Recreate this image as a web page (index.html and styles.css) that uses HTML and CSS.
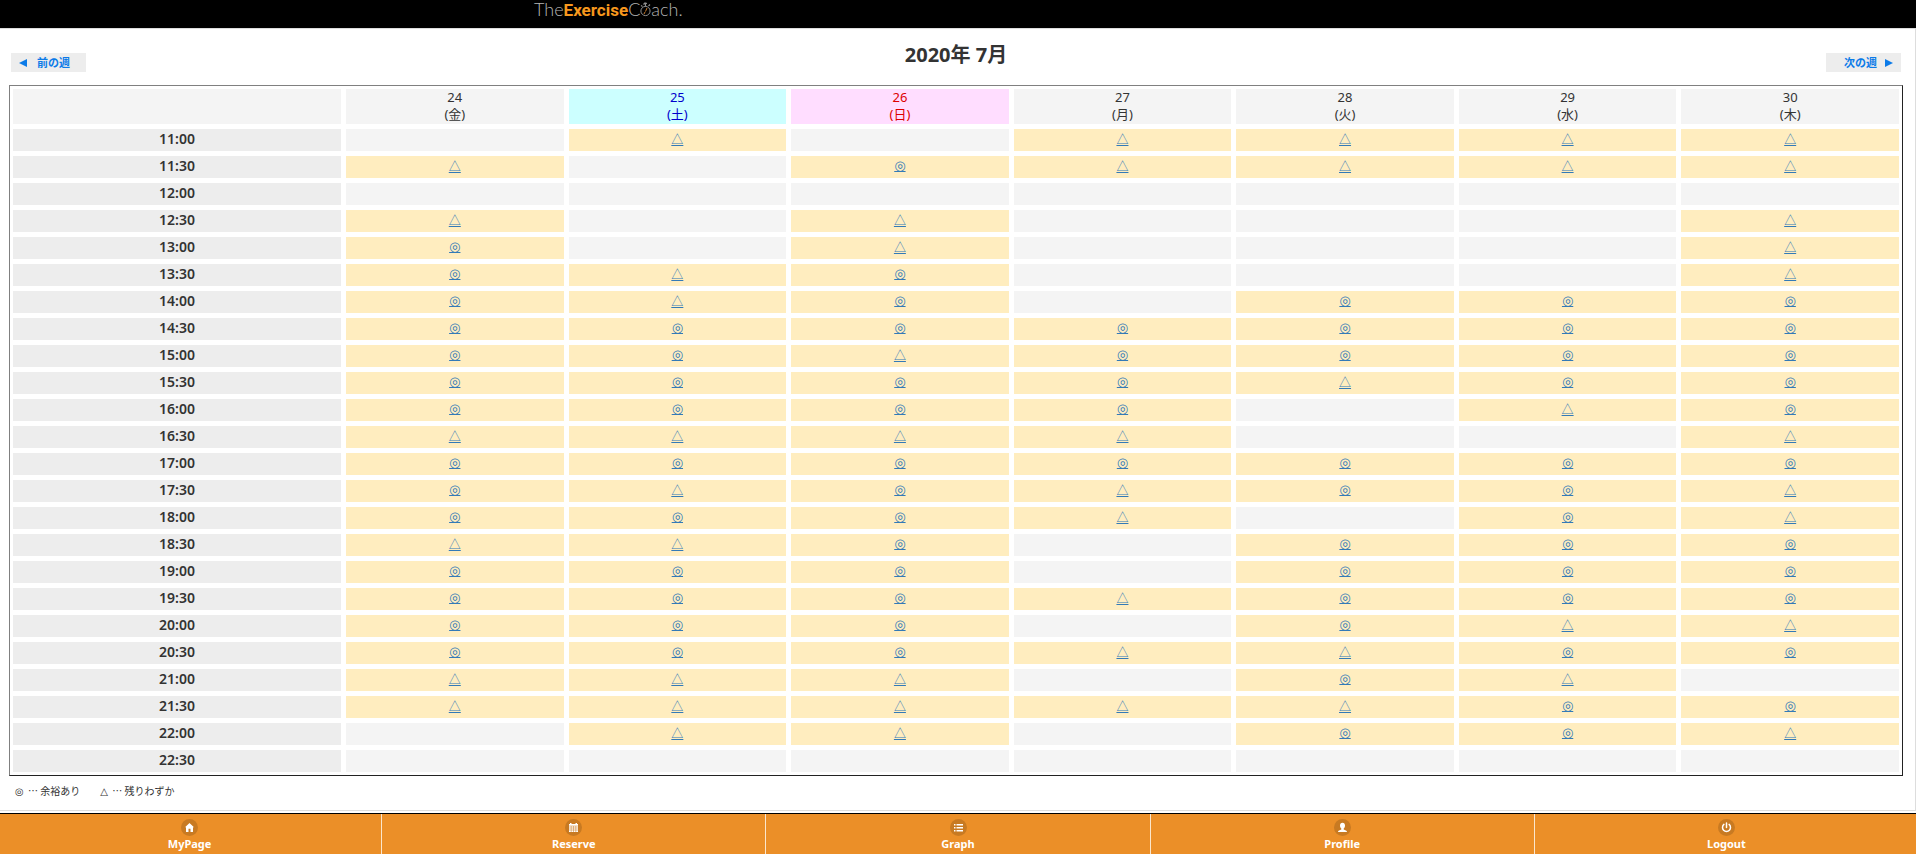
FILE: index.html
```html
<!DOCTYPE html>
<html lang="ja">
<head>
<meta charset="utf-8">
<title>The Exercise Coach</title>
<link rel="stylesheet" href="styles.css">
</head>
<body>
<header class="site-header">
  <div class="logo"><span class="logo-thin">The</span><span class="logo-bold">Exercise</span><span class="logo-thin">C</span><svg class="logo-watch" viewBox="0 0 11 18" aria-hidden="true"><g fill="none" stroke="#8f8f8f"><circle cx="5.5" cy="11" r="4.6" stroke-width="1"/><path d="M3.5 4.5L5 3l2 .5M5.5 3v3.400M1 5.500l1.500 1M8.500 6l1.500-1.500" stroke-width="1.200"/></g><path d="M5.500 11.500L7 8M5 12l-1 2" stroke="#c87a2a" stroke-width="1" fill="none"/></svg><span class="logo-thin">ach.</span></div>
</header>
<main class="page">
  <div class="week-bar">
    <a class="week-link" href="#"><svg viewBox="0 0 8 8" aria-hidden="true"><path d="M8 0v8L0 4z"/></svg><span>前の週</span></a>
    <h1 class="month">2020年 7月</h1>
    <a class="week-link week-next" href="#"><span>次の週</span><svg viewBox="0 0 8 8" aria-hidden="true"><path d="M0 0v8l8-4z"/></svg></a>
  </div>
  <table class="schedule">
    <colgroup><col class="col-time"><col span="7"></colgroup>
    <thead>
      <tr>
        <td></td>
        <th scope="col">24<br>(金)</th>
        <th scope="col" class="sat">25<br>(土)</th>
        <th scope="col" class="sun">26<br>(日)</th>
        <th scope="col">27<br>(月)</th>
        <th scope="col">28<br>(火)</th>
        <th scope="col">29<br>(水)</th>
        <th scope="col">30<br>(木)</th>
      </tr>
    </thead>
    <tbody id="slots"></tbody>
  </table>
  <p class="legend"><span><span class="mark">◎</span> … 余裕あり</span><span><span class="mark">△</span> … 残りわずか</span></p>
</main>
<nav class="tabs">
  <a href="#"><svg viewBox="0 0 17 17" aria-hidden="true"><circle cx="8.500" cy="8.500" r="8.500"/><path d="M8.500 4L4 8.300h1V13h2.500V9.800h2V13H12V8.300h1z"/></svg><span>MyPage</span></a>
  <a href="#"><svg viewBox="0 0 17 17" aria-hidden="true"><circle cx="8.500" cy="8.500" r="8.500"/><path d="M4 5h1V4h1.500v1h4V4H12v1h1v8H4z"/><path class="cut" d="M4 7h9M4 9h9M4 11h9M6.200 7v6M8.500 7v6M10.800 7v6"/></svg><span>Reserve</span></a>
  <a href="#"><svg viewBox="0 0 17 17" aria-hidden="true"><circle cx="8.500" cy="8.500" r="8.500"/><path d="M4 5h1.500v1.500H4zM6.500 5H13v1.500H6.500zM4 8h1.500v1.500H4zM6.500 8H13v1.500H6.500zM4 11h1.500v1.500H4zM6.500 11H13v1.500H6.500z"/></svg><span>Graph</span></a>
  <a href="#"><svg viewBox="0 0 17 17" aria-hidden="true"><circle cx="8.500" cy="8.500" r="8.500"/><path d="M8.500 3.800c1.700 0 2.500 1.200 2.500 2.800 0 1.300-.5 2.300-1.300 3v.9c1.500.5 3.300 1 3.300 2.500H4c0-1.500 1.800-2 3.300-2.500v-.9C6.500 8.900 6 7.900 6 6.600c0-1.600.8-2.800 2.500-2.800z"/></svg><span>Profile</span></a>
  <a href="#"><svg viewBox="0 0 17 17" aria-hidden="true"><circle cx="8.500" cy="8.500" r="8.500"/><path class="line" d="M8.500 4v4.500M5.900 5.400a4 4 0 1 0 5.200 0"/></svg><span>Logout</span></a>
</nav>
<script src="schedule.js"></script>
</body>
</html>
```
FILE: styles.css
```css
* { box-sizing: border-box; }
body {
  margin: 0;
  min-height: 100vh;
  display: flex;
  flex-direction: column;
  overflow-x: hidden;
  background: #fff;
  color: #333;
  font: 13px/18px "Noto Sans", "Noto Sans CJK JP", sans-serif;
}
.site-header {
  height: 28px;
  background: #000;
  padding-left: 534px;
}
.logo {
  display: flex;
  align-items: baseline;
  height: 18px;
  line-height: 18px;
  white-space: nowrap;
}
.logo-thin { font-family: Lato, sans-serif; font-weight: 300; font-size: 18px; color: #b5b5b5; }
.logo-bold { font-family: Roboto, sans-serif; font-weight: 700; font-size: 17px; color: #f7981d; }
.logo-watch { width: 11px; height: 18px; align-self: flex-start; }
.page {
  flex: 1;
  border: solid #ddd;
  border-width: 1px 1px 1px 0;
  padding: 14px 12px 8px 9px;
  margin-bottom: 2px;
}
.week-bar {
  display: flex;
  justify-content: space-between;
  align-items: flex-end;
  height: 29px;
  margin: 0 2px 13px;
}
.month { margin: 0; font-size: 20px; line-height: 24px; align-self: flex-start; }
.week-link {
  display: flex;
  align-items: center;
  gap: 10px;
  width: 75px;
  height: 19px;
  padding: 0 8px;
  background: #ededed;
  color: #0c7be8;
  font-size: 11px;
  font-weight: 700;
  text-decoration: none;
}
.week-link svg { width: 8px; height: 8px; fill: currentColor; }
.week-next { justify-content: flex-end; gap: 8px; }
.schedule {
  width: 100%;
  table-layout: fixed;
  border: 1px solid;
  border-color: #808080 #222 #222 #808080;
  border-collapse: separate;
  border-spacing: 1px;
}
.col-time { width: 332px; }
.schedule th, .schedule td {
  height: 26px;
  padding: 0;
  border: 2px solid #fff;
  background: #f4f4f4;
  text-align: center;
  vertical-align: top;
}
.schedule thead th, .schedule thead td { height: 39px; line-height: 17px; font-weight: 400; }
.schedule thead .sat { background: #cff; color: #00c; }
.schedule thead .sun { background: #fdf; color: #d00; }
.schedule tbody th { background: #ededed; font-size: 14px; font-weight: 600; line-height: 20px; }
.schedule tbody .open { background: #ffedbf; }
.schedule tbody td { font-size: 12px; line-height: 20px; }
.schedule a { color: #337ab7; font-family: "Noto Sans CJK JP", sans-serif; }
.schedule .plenty { font-family: "DejaVu Sans", sans-serif; font-size: 13px; }
.legend {
  display: flex;
  gap: 20px;
  margin: 6px 0 0;
  padding-left: 6px;
  font-family: "Noto Sans CJK JP", sans-serif;
  font-size: 10px;
}
.legend .mark { margin-right: 2px; font-family: "DejaVu Sans", sans-serif; }
.tabs {
  display: flex;
  margin: 0 -2px;
  border-top: 1px solid #000;
  background: #eb8f28;
}
.tabs a {
  flex: 1;
  display: flex;
  flex-direction: column;
  align-items: center;
  height: 40px;
  padding-top: 5px;
  border-right: 1px solid #fbe6cc;
  color: #fff;
  font: 700 11px/15px "Noto Sans", sans-serif;
  text-decoration: none;
}
.tabs a:last-child { border-right: 0; }
.tabs svg { width: 17px; height: 17px; fill: #fff; }
.tabs circle { fill: #c87a22; }
.tabs .cut { fill: none; stroke: #c87a22; stroke-width: .5; }
.tabs .line { fill: none; stroke: #fff; stroke-width: 1.5; stroke-linecap: round; }
```
FILE: schedule.js
```js
// One letter per day: O = plenty of room, T = few left, - = not bookable
const slots = {
  "11:00": "-T-TTTT", "11:30": "T-OTTTT", "12:00": "-------", "12:30": "T-T---T",
  "13:00": "O-T---T", "13:30": "OTO---T", "14:00": "OTO-OOO", "14:30": "OOOOOOO",
  "15:00": "OOTOOOO", "15:30": "OOOOTOO", "16:00": "OOOO-TO", "16:30": "TTTT--T",
  "17:00": "OOOOOOO", "17:30": "OTOTOOT", "18:00": "OOOT-OT", "18:30": "TTO-OOO",
  "19:00": "OOO-OOO", "19:30": "OOOTOOO", "20:00": "OOO-OTT", "20:30": "OOOTTOO",
  "21:00": "TTT-OT-", "21:30": "TTTTTOO", "22:00": "-TT-OOT", "22:30": "-------"
};
const marks = {
  O: '<a class="plenty" href="#">◎</a>',
  T: '<a class="few" href="#">△</a>'
};
document.getElementById("slots").innerHTML = Object.entries(slots).map(([time, days]) =>
  `<tr><th scope="row">${time}</th>` + [...days].map(d =>
    marks[d] ? `<td class="open">${marks[d]}</td>` : "<td></td>").join("") + "</tr>"
).join("");
```
